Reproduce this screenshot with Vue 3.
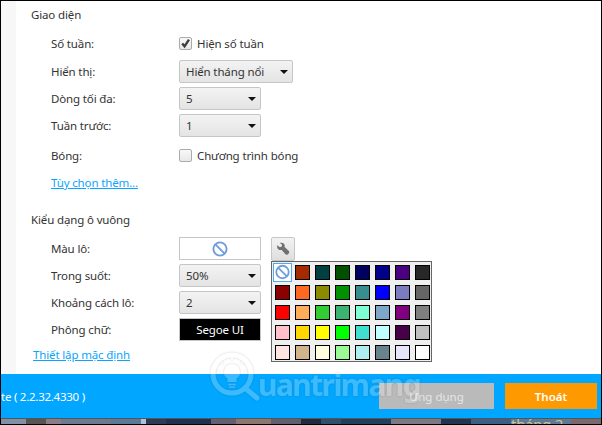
<script setup>
const none = 'none'
const palette = [
  none, '#a52a00', '#004040', '#005000', '#000060', '#00008b', '#4b0082', '#282828',
  '#8b0000', '#ff6820', '#8b8b00', '#009000', '#388e8e', '#0000ff', '#7b7bc0', '#666666',
  '#ff0000', '#ffad5b', '#32cd32', '#3cb371', '#7fffd4', '#7da7c9', '#800080', '#7f7f7f',
  '#ffc0cb', '#ffd700', '#ffff00', '#00ff00', '#40e0d0', '#c0ffff', '#480048', '#c0c0c0',
  '#ffe4e1', '#d2b48c', '#ffffe0', '#98fb98', '#afeeee', '#68838b', '#e6e6fa', '#ffffff'
]
</script>

<template>
  <div class="window">
    <div class="body">
      <div class="gutter"></div>
      <div class="content">
        <div class="section-title first">Giao diện</div>
        <div class="row check-row">
          <span class="label">Số tuần:</span>
          <label class="check"><span class="box"><svg width="13" height="13" viewBox="0 0 13 13"><path d="M2.6 6.4 L5.4 9.8 L10.6 1.8" fill="none" stroke="#3c3c3c" stroke-width="2.8"/></svg></span>Hiện số tuần</label>
        </div>
        <div class="row">
          <span class="label">Hiển thị:</span>
          <div class="select wide"><span>Hiển tháng nổi</span><i class="caret"></i></div>
        </div>
        <div class="row">
          <span class="label">Dòng tối đa:</span>
          <div class="select"><span>5</span><i class="caret"></i></div>
        </div>
        <div class="row">
          <span class="label">Tuần trước:</span>
          <div class="select"><span>1</span><i class="caret"></i></div>
        </div>
        <div class="row check-row second">
          <span class="label">Bóng:</span>
          <label class="check"><span class="box"></span>Chương trình bóng</label>
        </div>
        <a class="link more">Tùy chọn thêm...</a>

        <div class="section-title style-title">Kiểu dạng ô vuông</div>
        <div class="row">
          <span class="label">Màu lô:</span>
          <div class="color-box">
            <svg width="18" height="18" viewBox="0 0 18 18"><circle cx="9" cy="9" r="6.6" fill="none" stroke="#6d9edc" stroke-width="1.9"/><path d="M4.4 4.4 L13.6 13.6" stroke="#6d9edc" stroke-width="1.9"/></svg>
          </div>
          <div class="wrench">
            <svg width="14" height="14" viewBox="0 0 16 16"><path d="M1.6 3.6 L4.4 6 L6.6 5.2 L7 3 L4.4 1 C7 .2 9.8 1.2 10 4.2 L9.8 5.8 L15 10.6 L15 12.6 L13 14.6 L11 14.4 L6.6 9 L4.6 9.2 C2.2 9 .8 6 1.6 3.6 Z" fill="#707070"/></svg>
          </div>
        </div>
        <div class="row">
          <span class="label">Trong suốt:</span>
          <div class="select"><span>50%</span><i class="caret"></i></div>
        </div>
        <div class="row">
          <span class="label">Khoảng cách lô:</span>
          <div class="select"><span>2</span><i class="caret"></i></div>
        </div>
        <div class="row">
          <span class="label">Phông chữ:</span>
          <div class="font-box">Segoe UI</div>
        </div>
        <a class="link reset">Thiết lập mặc định</a>

        <div class="palette">
          <div v-for="(c, i) in palette" :key="i" class="cell">
            <div v-if="c === 'none'" class="none-cell">
              <svg width="18" height="18" viewBox="0 0 18 18"><circle cx="9" cy="9" r="6.6" fill="none" stroke="#6d9edc" stroke-width="1.9"/><path d="M4.4 4.4 L13.6 13.6" stroke="#6d9edc" stroke-width="1.9"/></svg>
            </div>
            <div v-else class="swatch" :style="{ background: c }"></div>
          </div>
        </div>
      </div>
    </div>
    <div class="footer">
      <span class="version">te ( 2.2.32.4330 )</span>
      <div class="actions">
        <button class="btn apply">Ứng dụng</button>
        <button class="btn exit">Thoát</button>
      </div>
    </div>
    <div class="photo"><span class="photo-text">tháng 2</span></div>

    <div class="watermark">
      <svg width="54" height="52" viewBox="0 0 54 52">
        <circle cx="22" cy="22" r="19" fill="none" stroke="#fff" stroke-width="5"/>
        <path d="M35 36 L47 46" stroke="#fff" stroke-width="5" stroke-linecap="round"/>
        <path d="M22 12 a8 8 0 0 1 4.5 14.6 v3.4 h-9 v-3.4 a8 8 0 0 1 4.5 -14.6 Z" fill="#fff"/>
        <path d="M18 32.5 h8 M19 35 h6" stroke="#fff" stroke-width="1.5"/>
        <path d="M22 5 v3 M11 10 l2 2 M33 10 l-2 2 M7 20 h3 M34 20 h3" stroke="#fff" stroke-width="1.6"/>
      </svg>
      <span class="wm-text">uantrimang</span>
    </div>
  </div>
</template>

<style>
html, body { margin: 0; background: #fff; }
</style>

<style scoped>
.window {
  position: relative;
  width: 602px;
  height: 425px;
  box-sizing: border-box;
  border: 1px solid #000;
  overflow: hidden;
  display: flex;
  flex-direction: column;
  font-family: "Noto Sans", "Open Sans", sans-serif;
  font-size: 11.5px;
  letter-spacing: -0.14px;
  color: #333;
}
.body { height: 373px; display: flex; flex: none; background: #fff; }
.gutter { width: 15px; background: #f7f7f7; flex: none; }
.content { position: relative; flex: 1; padding-left: 35px; }
.section-title { margin-left: -20px; line-height: 16px; }
.first { padding-top: 6px; margin-bottom: 11px; }
.style-title { margin-top: 21px; margin-bottom: 9px; }
.row { display: flex; align-items: center; height: 23px; margin-bottom: 4px; }
.check-row { height: 18px; margin-bottom: 8px; }
.check-row.second { margin-top: 9px; }
.label { width: 128px; flex: none; }
.check { display: flex; align-items: center; gap: 5px; }
.box {
  width: 11px; height: 11px;
  border: 1px solid #ababab; border-radius: 2px;
  background: linear-gradient(#f8f8f8, #e8e8e8);
  display: flex; align-items: center; justify-content: center;
}
.select {
  box-sizing: border-box;
  width: 82px; height: 23px;
  border: 1px solid #c6c6c6; border-radius: 2px;
  background: linear-gradient(#f3f3f3, #e4e4e4);
  display: flex; align-items: center; justify-content: space-between;
  padding: 0 4px 0 6px;
}
.select.wide { width: 114px; }
.caret {
  width: 0; height: 0;
  border-left: 4px solid transparent; border-right: 4px solid transparent;
  border-top: 4px solid #111;
}
.link { display: block; color: #0aa5ff; text-decoration: underline; line-height: 16px; }
.more { margin-top: 11px; }
.reset { margin-left: -18px; margin-top: 6px; }
.color-box {
  box-sizing: border-box;
  width: 82px; height: 23px;
  border: 1px solid #c6c6c6; background: #fff;
  display: flex; align-items: center; justify-content: center;
}
.wrench {
  box-sizing: border-box;
  width: 24px; height: 24px; margin-left: 10px;
  border: 1px solid #c6c6c6; border-radius: 2px;
  background: linear-gradient(#f3f3f3, #dedede);
  display: flex; align-items: center; justify-content: center;
}
.font-box {
  box-sizing: border-box;
  width: 82px; height: 23px;
  background: #000; color: #fff;
  border: 1px solid #c6c6c6;
  display: flex; align-items: center; justify-content: center;
}
.palette {
  position: absolute;
  left: 255px; top: 260px;
  box-sizing: border-box;
  width: 161px; height: 101px;
  border: 1px solid #666;
  background: #f0f0f0;
  display: grid;
  grid-template-columns: repeat(8, 20px);
  grid-auto-rows: 20px;
}
.cell { display: flex; align-items: center; justify-content: center; }
.swatch { box-sizing: border-box; width: 15px; height: 15px; border: 1px solid #000; }
.none-cell {
  box-sizing: border-box; width: 19px; height: 19px;
  border: 1px solid #55a7ee; background: #fff;
  display: flex; align-items: center; justify-content: center;
}
.footer {
  height: 44px; flex: none;
  background: #00a6ff;
  color: #fff;
  display: flex; align-items: center; justify-content: space-between;
}
.version { padding-left: 0; letter-spacing: -0.25px; }
.actions { display: flex; gap: 11px; padding-right: 4px; }
.btn {
  border: 0; height: 26px; padding: 0;
  font: inherit; color: #fff;
}
.apply { width: 115px; background: #bababa; color: #e6e6e6; }
.exit { width: 92px; background: #ff9900; font-weight: 600; }
.photo {
  flex: 1; position: relative; overflow: hidden;
  border-top: 1px solid #555;
  background: linear-gradient(90deg,
    #8090a5 0 25px, #555 25px 45px, #8a7d85 45px 60px, #6a7a90 60px 110px,
    #5b7a9a 110px 140px, #b0c0d8 140px 145px, #2b3b58 145px 165px, #1f3050 165px 210px,
    #606070 210px 235px, #8a7870 235px 270px, #605f70 270px 300px, #1e2c3e 300px 320px,
    #30506f 320px 340px, #20405e 340px 390px, #7a7a85 390px 440px, #203550 440px 470px,
    #3a6085 470px 510px, #5b7a95 510px 570px, #7a6a70 570px 602px);
}
.photo-text {
  position: absolute; left: 510px; top: -4px;
  font-size: 14.5px; line-height: 18px; letter-spacing: 0; color: #cfc596;
}
.watermark {
  position: absolute; left: 209px; top: 351px;
  display: flex; align-items: flex-start;
  opacity: .24; pointer-events: none;
  filter: drop-shadow(0 0 1px #444);
}
.wm-text {
  font-size: 30px; font-weight: 700; letter-spacing: -1.6px;
  color: #fff; line-height: 40px; margin: 13px 0 0 -6px;
}
</style>
